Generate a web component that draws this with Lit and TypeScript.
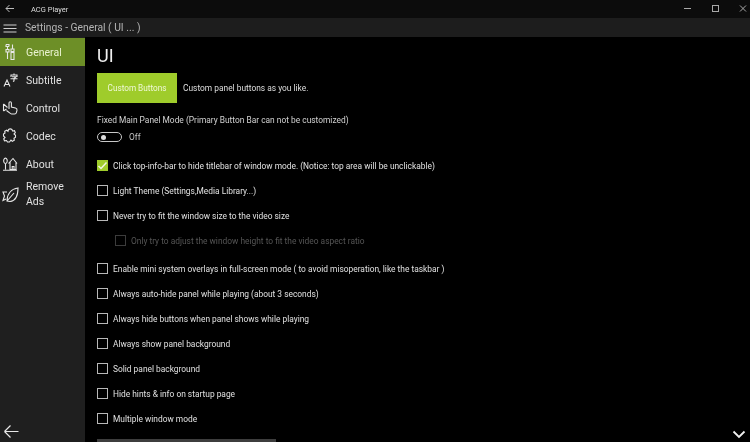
import { LitElement, html, css, svg } from "lit";
import { customElement } from "lit/decorators.js";

const icons: Record<string, unknown> = {
  general: svg`<path d="M6 2.500h3v2M6 2.500v2h3M7.500 4.500v3M6 7.500h3v2.500H6zM7.500 10v7M12.500 2.500v4.500M11 7h3v2.500h-3zM12.500 9.500v1M11 10.500h3v7h-3z"/>`,
  subtitle: svg`<path d="M4 16.500l3-6.500 3 6.500M5 14.500h4M14 3.500v1.500M11 7V5h6v2M12 6.800h4l-2 1.700v2.500l-1 .5M10.500 8.800h7"/>`,
  control: svg`<path d="M9 11V5a1.200 1.200 0 0 1 2.400 0V9l4 1c1.200.3 1.800 1 1.600 2.200l-.6 2.300c-.2 1-.8 1.500-1.800 1.500h-3c-1 0-1.500-.5-2-1.200L6.500 12.500M3.500 6v7M3.500 6l4 3.500M3.500 13l3-2"/>`,
  codec: svg`<path d="M8.500 3.500c1-.7 2.500-.7 3.500 0l.5 1.500 2-.3.800 2-1.300 1.300 1.500 1.300v2l-1.500 1 .3 2-2 1-1.300-1.300-1.500 2h-2l-1-1.500-2 .3-.8-2 1.300-1.300-1.500-1.500v-2l1.500-1-.3-1.800 2-1 1.300 1z"/>`,
  about: svg`<path d="M3 16.200h14M5.500 15.500V9.500M5.500 9.500a1.800 2.700 0 1 0-.1 0M8.500 9.500l4.500-5 4 5M10 8v7.500h6V8M12.200 15.500v-3h1.800v3"/>`,
  ads: svg`<path d="M7 17c0-7 4-12 11-13 0 8-3 13-8 13.500zM7 17l7-8M7 8H3l1.500 4L3 16.500 6 15"/>`,
};

const nav = [
  ["General", "general"],
  ["Subtitle", "subtitle"],
  ["Control", "control"],
  ["Codec", "codec"],
  ["About", "about"],
  ["Remove Ads", "ads"],
];

const groupA = ["Never try to fit the window size to the video size"];
const groupB = [
  "Enable mini system overlays in full-screen mode ( to avoid misoperation, like the taskbar )",
  "Always auto-hide panel while playing (about 3 seconds)",
  "Always hide buttons when panel shows while playing",
  "Always show panel background",
  "Solid panel background",
  "Hide hints & info on startup page",
  "Multiple window mode",
];

@customElement("app-root")
export class AppRoot extends LitElement {
  static styles = css`
    :host {
      display: flex;
      flex-direction: column;
      width: 750px;
      height: 442px;
      overflow: hidden;
      background: #000;
      color: #e6e6e6;
      font-family: Roboto, "Open Sans", sans-serif;
      filter: blur(0.3px);
    }
    .titlebar {
      height: 18px;
      flex: none;
      display: flex;
      align-items: center;
      background: #0c0c0c;
      font-size: 7.500px;
      color: #dcdcdc;
    }
    .back-small { width: 20px; height: 18px; flex: none; margin-right: 11px; }
    .app-name { flex: 1; }
    .win { width: 28px; height: 18px; flex: none; }
    .header {
      height: 19px;
      flex: none;
      display: flex;
      align-items: center;
      background: #1d1d1d;
      font-size: 10.300px;
      color: #b4b4b4;
    }
    .burger { width: 25px; height: 19px; flex: none; }
    .main { flex: 1; display: flex; min-height: 0; }
    .side {
      width: 85px;
      flex: none;
      display: flex;
      flex-direction: column;
      position: relative;
      background: #1f1f1f;
      padding-top: 1px;
    }
    .item {
      display: flex;
      align-items: center;
      min-height: 28px;
      font-size: 10.500px;
      line-height: 14.500px;
      color: #e0e0e0;
    }
    .item.on { background: #6d8f27; color: #eaf3d0; }
    .item svg {
      width: 20px;
      height: 20px;
      flex: none;
      margin: 0 6px 0 0;
      fill: none;
      stroke: #e8e8e8;
      stroke-width: 1.100;
    }
    .item .label { width: 50px; padding-top: 2px; }
    .bottom-back {
      position: absolute;
      left: 3px;
      bottom: 2px;
      width: 17px;
      height: 17px;
      fill: none;
      stroke: #e8e8e8;
      stroke-width: 1.200;
    }
    .content {
      flex: 1;
      min-width: 0;
      padding: 8px 0 0 12px;
      display: flex;
      flex-direction: column;
      align-items: flex-start;
      position: relative;
    }
    h1 {
      margin: 0;
      height: 21px;
      font-size: 18px;
      line-height: 21px;
      font-weight: 400;
      color: #f0f0f0;
    }
    .cb-row {
      margin-top: 7px;
      display: flex;
      align-items: center;
      gap: 6px;
      font-size: 8.400px;
      color: #dedede;
    }
    .btn {
      width: 80px;
      height: 30px;
      display: flex;
      align-items: center;
      justify-content: center;
      background: #9fcc2b;
      color: #f0f8d8;
      font-size: 8.200px;
    }
    .fixed { margin-top: 11px; font-size: 8.400px; line-height: 12px; color: #d2d2d2; }
    .toggle-row {
      margin-top: 6px;
      display: flex;
      align-items: center;
      gap: 7px;
      font-size: 8.400px;
      color: #c4c4c4;
    }
    .toggle {
      width: 20px;
      height: 8px;
      border: 1.500px solid #c8c8c8;
      border-radius: 7px;
      display: flex;
      align-items: center;
      padding-left: 3px;
    }
    .toggle i { width: 5px; height: 5px; border-radius: 50%; background: #dcdcdc; }
    .rows { display: flex; flex-direction: column; align-items: flex-start; margin-top: 11px; }
    .row {
      height: 25px;
      display: flex;
      align-items: center;
      gap: 5px;
      font-size: 8.400px;
      color: #e0e0e0;
      white-space: nowrap;
    }
    .row.sub { margin-left: 18px; color: #555; margin-bottom: 3px; }
    .box {
      width: 9px;
      height: 9px;
      border: 1.500px solid #b8b8b8;
      flex: none;
    }
    .sub .box { border-color: #3c3c3c; }
    .box.checked {
      background: #9fcc2b;
      border-color: #9fcc2b;
      display: flex;
      align-items: center;
      justify-content: center;
    }
    .box.checked svg { width: 11px; height: 11px; flex: none; fill: none; stroke: #f2f7e0; stroke-width: 1.500; }
    .bar {
      position: absolute;
      left: 12px;
      bottom: 0;
      width: 179px;
      height: 3px;
      background: #3d3d3d;
    }
    .chev {
      position: absolute;
      right: 4px;
      bottom: 3px;
      width: 14px;
      height: 9px;
      fill: none;
      stroke: #f0f0f0;
      stroke-width: 1.800;
    }
  `;

  private row(t: string, cls = "") {
    return html`<div class="row ${cls}"><span class="box"></span><span>${t}</span></div>`;
  }

  render() {
    return html`
      <div class="titlebar">
        <svg class="back-small" viewBox="0 0 20 18" fill="none" stroke="#bdbdbd"><path d="M6 8.500h8M6 8.500l3.500-3.500M6 8.500l3.500 3.500"/></svg>
        <span class="app-name">ACG Player</span>
        <svg class="win" viewBox="0 0 28 18" fill="none" stroke="#a8a8a8"><path d="M18 8.500h7"/></svg>
        <svg class="win" viewBox="0 0 28 18" fill="none" stroke="#a8a8a8"><rect x="18.500" y="5.500" width="6" height="6"/></svg>
        <svg class="win" viewBox="0 0 28 18" fill="none" stroke="#a8a8a8"><path d="M18 5.500l6 6M24 5.500l-6 6"/></svg>
      </div>
      <div class="header">
        <svg class="burger" viewBox="0 0 25 19" fill="none" stroke="#d0d0d0" stroke-width="1.200"><path d="M3.500 7h13M3.500 10.500h13M3.500 14h13"/></svg>
        <span>Settings - General ( UI ... )</span>
      </div>
      <div class="main">
        <nav class="side">
          ${nav.map(
            ([label, ic], i) => html`
              <div class="item ${i === 0 ? "on" : ""}">
                <svg viewBox="0 0 20 20">${icons[ic]}</svg>
                <span class="label">${label}</span>
              </div>`
          )}
          <svg class="bottom-back" viewBox="0 0 17 17"><path d="M1.500 8.500h14M1.500 8.500l6-6M1.500 8.500l6 6"/></svg>
        </nav>
        <section class="content">
          <h1>UI</h1>
          <div class="cb-row">
            <div class="btn">Custom Buttons</div>
            <span>Custom panel buttons as you like.</span>
          </div>
          <div class="fixed">Fixed Main Panel Mode (Primary Button Bar can not be customized)</div>
          <div class="toggle-row">
            <span class="toggle"><i></i></span><span>Off</span>
          </div>
          <div class="rows">
            <div class="row">
              <span class="box checked"><svg viewBox="0 0 11 11"><path d="M1.500 6l2.500 2.500 5.500-6"/></svg></span>
              <span>Click top-info-bar to hide titlebar of window mode. (Notice: top area will be unclickable)</span>
            </div>
            ${this.row("Light Theme (Settings,Media Library...)")}
            ${groupA.map((t) => this.row(t))}
            ${this.row("Only try to adjust the window height to fit the video aspect ratio", "sub")}
            ${groupB.map((t) => this.row(t))}
          </div>
          <div class="bar"></div>
          <svg class="chev" viewBox="0 0 14 9"><path d="M1.500 1.500L7 7l5.500-5.500"/></svg>
        </section>
      </div>
    `;
  }
}
